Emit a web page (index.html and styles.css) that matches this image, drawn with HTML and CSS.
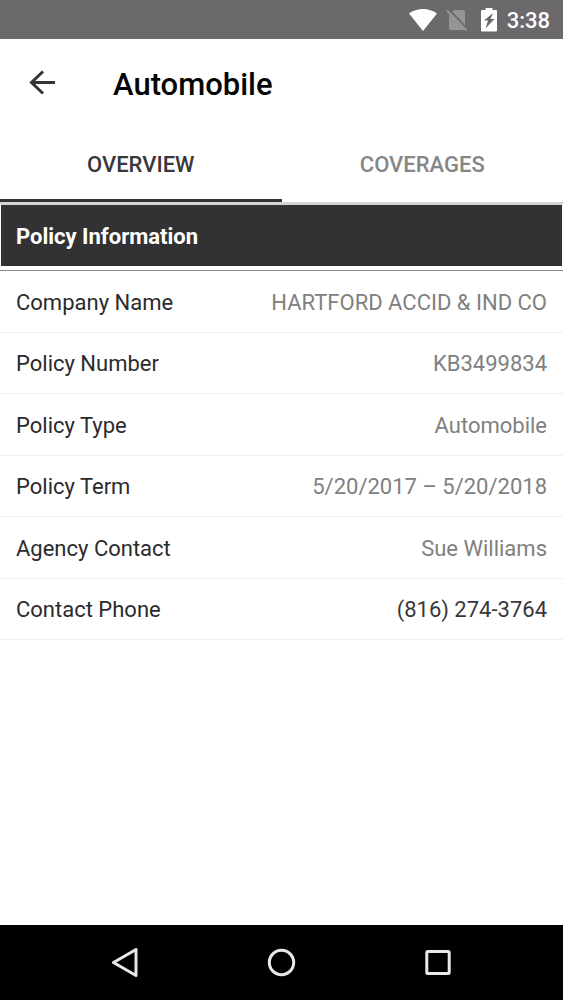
FILE: index.html
```html
<!DOCTYPE html>
<html lang="en">
<head>
<meta charset="utf-8">
<meta name="viewport" content="width=device-width, initial-scale=1">
<title>Automobile</title>
<link rel="stylesheet" href="styles.css">
</head>
<body class="screen">
<div class="status-bar">
  <svg class="status-wifi" viewBox="0 0 28 22" aria-hidden="true"><path d="M0 4.500C8-1.500 20-1.500 28 4.500L14 22z"/></svg>
  <svg class="status-sim" viewBox="0 0 22 24" aria-hidden="true"><path class="sim-body" d="M8.500 2H17.500Q19 2 19 3.500V22H4.500Q3 22 3 20.500V7.500z"/><path class="sim-gap" d="M2.500 1L21.500 21"/><path class="sim-slash" d="M1 2.500l19.500 20"/></svg>
  <svg class="status-battery" viewBox="0 0 16 24" aria-hidden="true"><path class="battery-body" d="M4.500 0h7v2H15q1 0 1 1v19.500q0 1-1 1H1q-1 0-1-1V3q0-1 1-1h3.500z"/><path class="battery-bolt" d="M12 5L3 12.500h4L4.500 20.500l9-9.500H9.500z"/></svg>
  <span class="status-time">3:38</span>
</div>
<header class="app-bar">
  <button class="back-button" type="button" aria-label="Back">
    <svg class="back-icon" viewBox="0 0 26 26" aria-hidden="true"><path d="M26 12.500H3M14 1.500L2.500 12.500L14 23.500"/></svg>
  </button>
  <h1 class="page-title">Automobile</h1>
</header>
<div class="tabs" role="tablist">
  <button class="tab tab-active" type="button" role="tab" aria-selected="true">OVERVIEW</button>
  <button class="tab" type="button" role="tab" aria-selected="false">COVERAGES</button>
</div>
<main class="content">
  <h2 class="section-title">Policy Information</h2>
  <dl class="details">
    <div class="row"><dt>Company Name</dt><dd>HARTFORD ACCID &amp; IND CO</dd></div>
    <div class="row"><dt>Policy Number</dt><dd>KB3499834</dd></div>
    <div class="row"><dt>Policy Type</dt><dd>Automobile</dd></div>
    <div class="row"><dt>Policy Term</dt><dd>5/20/2017 – 5/20/2018</dd></div>
    <div class="row"><dt>Agency Contact</dt><dd>Sue Williams</dd></div>
    <div class="row"><dt>Contact Phone</dt><dd><a class="phone" href="tel:+18162743764">(816) 274-3764</a></dd></div>
  </dl>
</main>
<nav class="nav-bar" aria-label="System">
  <button class="nav-button" type="button" aria-label="Back"><svg class="nav-icon" viewBox="0 0 30 30" aria-hidden="true"><path d="M26 1.500v26L3.500 14.500z"/></svg></button>
  <button class="nav-button" type="button" aria-label="Home"><svg class="nav-icon" viewBox="0 0 30 30" aria-hidden="true"><circle cx="15.500" cy="14.500" r="12.200"/></svg></button>
  <button class="nav-button" type="button" aria-label="Recent apps"><svg class="nav-icon" viewBox="0 0 30 30" aria-hidden="true"><rect x="3.800" y="3.500" width="22.400" height="22" rx="1"/></svg></button>
</nav>
</body>
</html>
```
FILE: styles.css
```css
* {
  box-sizing: border-box;
}

.screen {
  display: flex;
  flex-direction: column;
  min-height: 100vh;
  margin: 0;
  background: #fff;
  color: #2b2b2d;
  font-family: Roboto, "Liberation Sans", sans-serif;
  font-size: 22px;
  line-height: 26px;
}

button {
  border: 0;
  padding: 0;
  background: none;
  color: inherit;
  font: inherit;
  cursor: pointer;
}

.status-bar {
  display: flex;
  align-items: center;
  justify-content: flex-end;
  height: 39px;
  padding-right: 13px;
  background: #6b696b;
  color: #fff;
}

.status-wifi {
  width: 28px;
  height: 22px;
  margin-right: 9px;
  fill: #fff;
}

.status-sim {
  width: 22px;
  height: 24px;
  margin-right: 13px;
}

.sim-body {
  fill: #969496;
}

.sim-slash {
  fill: none;
  stroke: #969496;
  stroke-width: 2;
}

.sim-gap {
  fill: none;
  stroke: #6b696b;
  stroke-width: 2;
}

.status-battery {
  width: 16px;
  height: 24px;
  margin-right: 10px;
}

.battery-body {
  fill: #fff;
}

.battery-bolt {
  fill: #6b696b;
}

.status-time {
  padding-top: 2px;
  font-weight: 500;
}

.app-bar {
  display: flex;
  align-items: center;
  height: 88px;
  padding: 0 29px;
}

.back-button {
  display: flex;
  margin-right: 58px;
}

.back-icon {
  width: 26px;
  height: 26px;
  fill: none;
  stroke: #343436;
  stroke-width: 3;
}

.page-title {
  margin: 0;
  padding-top: 3px;
  color: #050505;
  font-size: 31px;
  font-weight: 500;
  line-height: 36px;
}

.tabs {
  display: flex;
  height: 78px;
  border-bottom: 3px solid #d6d5d6;
}

.tab {
  flex: 1;
  padding-top: 4px;
  border-bottom: 3px solid transparent;
  color: #868686;
  font-weight: 500;
}

.tab-active {
  border-bottom-color: #343236;
  color: #38373a;
}

.content {
  flex: 1;
}

.section-title {
  margin: 0 1px 4px;
  padding: 19px 15px 16px;
  background: #323234;
  color: #fff;
  font-size: 22px;
  font-weight: 700;
  line-height: 26px;
}

.details {
  display: grid;
  grid-auto-rows: 1fr;
  min-height: 370px;
  margin: 0;
  border-top: 1px solid #8c8a8c;
}

.row {
  display: flex;
  align-items: center;
  justify-content: space-between;
  padding: 3px 16px 0;
  border-bottom: 1px solid #efefef;
}

dd {
  margin: 0;
  color: #808080;
}

.phone {
  color: #38383a;
  text-decoration: none;
}

.nav-bar {
  display: flex;
  height: 75px;
  padding: 0 47px;
  background: #000;
}

.nav-button {
  display: flex;
  flex: 1;
  align-items: center;
  justify-content: center;
}

.nav-icon {
  width: 30px;
  height: 30px;
  fill: none;
  stroke: #e8e8e8;
  stroke-width: 3;
  stroke-linejoin: round;
}
```
